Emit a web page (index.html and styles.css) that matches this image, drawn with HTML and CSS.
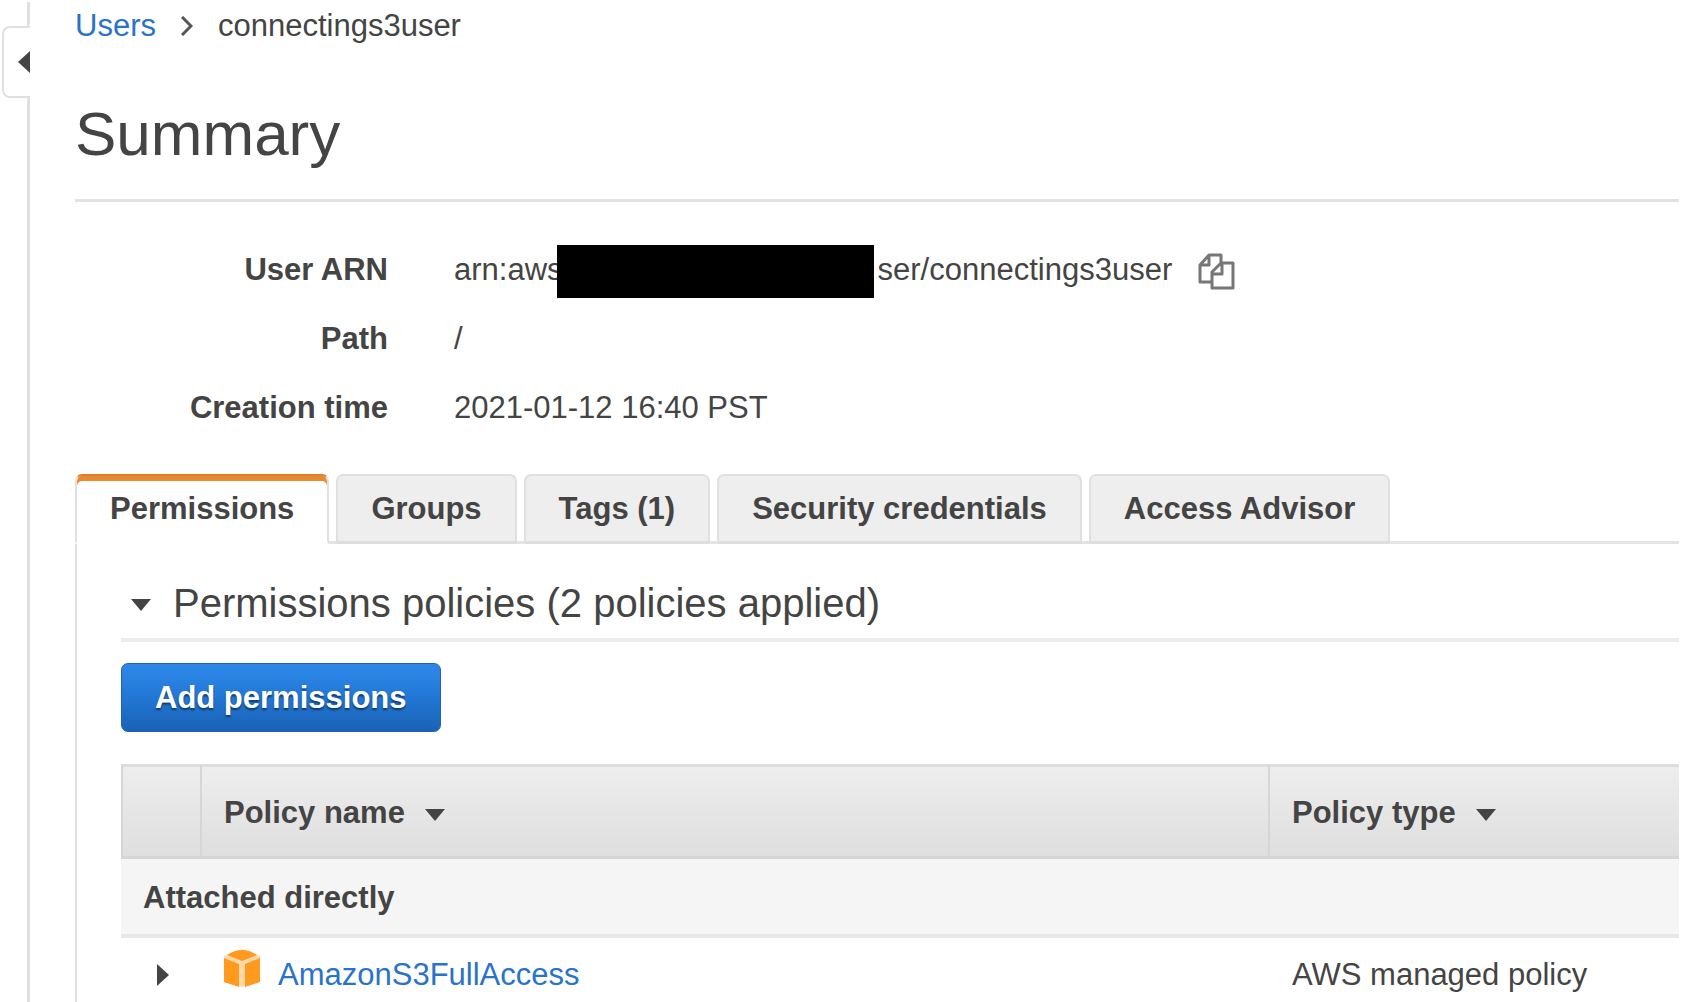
FILE: index.html
```html
<!DOCTYPE html>
<html lang="en">
<head>
<meta charset="utf-8">
<meta name="viewport" content="width=device-width, initial-scale=1">
<title>connectings3user</title>
<link rel="stylesheet" href="styles.css">
</head>
<body>
<aside class="rail">
  <div class="rail-top"></div>
  <button class="rail-toggle" type="button" aria-label="Open navigation">
    <svg width="12" height="22" viewBox="0 0 12 22" aria-hidden="true"><path d="M12 0v22L0 11z"/></svg>
  </button>
  <div class="rail-rest"></div>
</aside>
<main class="main">
  <nav class="crumbs" aria-label="Breadcrumb">
    <a href="#users">Users</a>
    <svg class="crumb-sep" width="12" height="20" viewBox="0 0 12 20" aria-hidden="true"><path d="M1 1l9 9-9 9"/></svg>
    <span>connectings3user</span>
  </nav>
  <h1 class="title">Summary</h1>
  <dl class="facts">
    <dt>User ARN</dt>
    <dd>
      <span>arn:aws</span><span class="redacted"></span><span>ser/connectings3user</span>
      <button class="copy" type="button" aria-label="Copy ARN">
        <svg width="38" height="38" viewBox="0 0 38 38" aria-hidden="true"><path d="M14 29H2V12L11 2h12v8M2 12h9V2M14 35V19l9-9h12v25zM14 21h10V10"/></svg>
      </button>
    </dd>
    <dt>Path</dt>
    <dd>/</dd>
    <dt>Creation time</dt>
    <dd>2021-01-12 16:40 PST</dd>
  </dl>
  <div class="tabs" role="tablist">
    <button class="tab active" type="button" role="tab" aria-selected="true">Permissions</button>
    <button class="tab" type="button" role="tab" aria-selected="false">Groups</button>
    <button class="tab" type="button" role="tab" aria-selected="false">Tags (1)</button>
    <button class="tab" type="button" role="tab" aria-selected="false">Security credentials</button>
    <button class="tab" type="button" role="tab" aria-selected="false">Access Advisor</button>
  </div>
  <section class="panel" role="tabpanel">
    <h2 class="section-title">
      <svg class="caret" width="20" height="12" viewBox="0 0 20 12" aria-hidden="true"><path d="M0 0h20L10 12z"/></svg>
      Permissions policies (2 policies applied)
    </h2>
    <button class="primary" type="button">Add permissions</button>
    <table class="policies">
      <colgroup><col class="col-expand"><col class="col-name"><col></colgroup>
      <thead>
        <tr>
          <th><span></span></th>
          <th scope="col"><span class="sort">Policy name <svg class="caret" width="20" height="12" viewBox="0 0 20 12" aria-hidden="true"><path d="M0 0h20L10 12z"/></svg></span></th>
          <th scope="col"><span class="sort">Policy type <svg class="caret" width="20" height="12" viewBox="0 0 20 12" aria-hidden="true"><path d="M0 0h20L10 12z"/></svg></span></th>
        </tr>
      </thead>
      <tbody>
        <tr class="group"><th colspan="3" scope="rowgroup">Attached directly</th></tr>
        <tr class="policy">
          <td>
            <button class="expand" type="button" aria-label="Expand AmazonS3FullAccess">
              <svg width="12" height="22" viewBox="0 0 12 22" aria-hidden="true"><path d="M0 0v22l12-11z"/></svg>
            </button>
          </td>
          <td>
            <span class="policy-name">
              <svg width="36" height="38" viewBox="0 0 36 38" aria-hidden="true">
                <path fill="#ffd9a8" d="M0 7L18 0l18 7v26l-18 5-18-5z"/>
                <path fill="#ff9a1f" d="M3 6Q18-4 33 6l-15 6zM0 9l15 6v23L0 33zM36 9l-15 6v23l15-5z"/>
              </svg>
              <a href="#policy">AmazonS3FullAccess</a>
            </span>
          </td>
          <td>AWS managed policy</td>
        </tr>
      </tbody>
    </table>
  </section>
</main>
</body>
</html>
```

FILE: styles.css
```css
* {
  box-sizing: border-box;
}

body {
  margin: 0;
  min-height: 100vh;
  display: flex;
  background: #fff;
  color: #444;
  font: 31px/40px "Liberation Sans", Arial, sans-serif;
}

button {
  margin: 0;
  padding: 0;
  border: 0;
  background: none;
  color: inherit;
  font: inherit;
  cursor: pointer;
}

svg {
  display: block;
  flex: none;
  fill: #444;
}

a {
  color: #2a73c9;
  text-decoration: none;
}

/* Collapsed navigation rail */
.rail {
  flex: none;
  width: 30px;
  padding-left: 2px;
  display: flex;
  flex-direction: column;
}

.rail-top,
.rail-rest {
  border-right: 3px solid #e0e0e0;
}

.rail-top {
  height: 24px;
  margin-top: 2px;
  border-bottom-right-radius: 3px;
}

.rail-rest {
  flex: 1;
}

.rail-toggle {
  height: 72px;
  display: flex;
  align-items: center;
  justify-content: flex-end;
  border: 2px solid #e0e0e0;
  border-right: 0;
  border-radius: 8px 0 0 8px;
}

/* Page header */
.main {
  flex: 1;
  min-width: 0;
  padding: 6px 27px 0 45px;
}

.crumbs {
  display: flex;
  align-items: center;
}

.crumb-sep {
  margin: 0 25px;
  fill: none;
  stroke: #555;
  stroke-width: 3;
}

.title {
  margin: 52px 0 0;
  padding-bottom: 29px;
  border-bottom: 3px solid #e2e2e2;
  font-size: 62px;
  font-weight: 400;
  line-height: 72px;
}

.facts {
  margin: 33px 0 32px;
  display: grid;
  grid-template-columns: 313px 1fr;
  column-gap: 66px;
  line-height: 69px;
}

.facts dt {
  font-weight: 700;
  text-align: right;
}

.facts dd {
  margin: 0;
  display: flex;
  align-items: center;
}

.redacted {
  width: 317px;
  height: 53px;
  margin: 4px 4px 0 -6px;
  background: #000;
}

.copy {
  margin: 4px 0 0 26px;
}

.copy svg {
  fill: none;
  stroke: #777;
  stroke-width: 3;
  stroke-linejoin: round;
}

/* Tabs */
.tabs {
  display: flex;
  gap: 7px;
  border-bottom: 3px solid #e4e4e4;
}

.tab {
  margin-bottom: -3px;
  padding: 0 33px;
  border: 2px solid #e0e0e0;
  border-bottom: 3px solid #dedede;
  border-radius: 7px 7px 0 0;
  background: #eee;
  font-weight: 700;
  line-height: 65px;
  white-space: nowrap;
}

.tab.active {
  border-top-color: #e47f21;
  border-bottom-color: #fff;
  background: #fff;
  box-shadow: inset 0 5px #e68a35;
}

.panel {
  padding: 35px 0 0 44px;
  border-left: 2px solid #e0e0e0;
}

.section-title {
  margin: 0 0 21px;
  padding: 0 0 11px 10px;
  display: flex;
  align-items: center;
  gap: 22px;
  border-bottom: 4px solid #ececec;
  font-size: 40px;
  font-weight: 400;
  line-height: 48px;
}

.section-title .caret,
.sort .caret {
  margin-top: 4px;
}

.primary {
  display: block;
  padding: 0 33px;
  border: 1px solid #2062ad;
  border-radius: 7px;
  background: linear-gradient(#2f89ea, #2277d5 50%, #1a62b5);
  color: #fff;
  font-weight: 700;
  line-height: 67px;
  text-shadow: 0 2px 2px rgba(0, 0, 0, 0.5);
}

/* Policies table */
.policies {
  width: 100%;
  margin-top: 32px;
  border-collapse: separate;
  border-spacing: 0;
  table-layout: fixed;
}

.col-expand {
  width: 81px;
}

.col-name {
  width: 1068px;
}

.policies th,
.policies td {
  padding: 0 0 0 22px;
  text-align: left;
}

.policies thead tr {
  background: linear-gradient(#eee, #dedede);
}

.policies thead th {
  height: 95px;
  padding-top: 2px;
  border: solid #d6d6d6;
  border-width: 3px 2px 3px 0;
  border-top-color: #ddd;
}

.policies thead th:first-child {
  border-left: 2px solid #d6d6d6;
}

.policies thead th:last-child {
  border-right: 0;
}

.sort {
  display: flex;
  align-items: center;
  gap: 20px;
}

.policies .group th {
  height: 79px;
  padding-top: 3px;
  border-bottom: 4px solid #e8e8e8;
  background: #f5f5f5;
}

.policies .policy td {
  padding-top: 17px;
  padding-bottom: 7px;
  vertical-align: top;
}

.expand {
  display: flex;
  align-items: center;
  height: 40px;
  margin-left: 14px;
}

.policy-name {
  display: flex;
  gap: 18px;
}

.policy-name svg {
  margin-top: -6px;
}
```
